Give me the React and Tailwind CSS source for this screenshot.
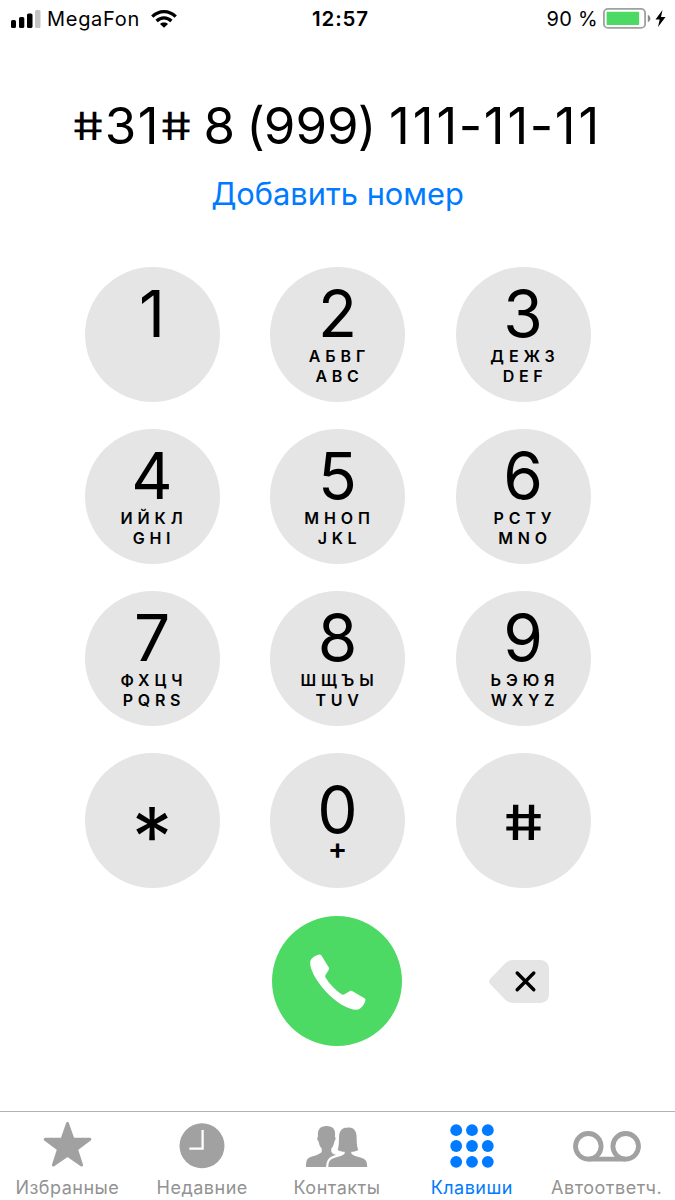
import React, { useState } from 'react';

const keys = [
  { digit: '1' },
  { digit: '2', cyr: 'АБВГ', lat: 'ABC' },
  { digit: '3', cyr: 'ДЕЖЗ', lat: 'DEF' },
  { digit: '4', cyr: 'ИЙКЛ', lat: 'GHI' },
  { digit: '5', cyr: 'МНОП', lat: 'JKL' },
  { digit: '6', cyr: 'РСТУ', lat: 'MNO' },
  { digit: '7', cyr: 'ФХЦЧ', lat: 'PQRS' },
  { digit: '8', cyr: 'ШЩЪЫ', lat: 'TUV' },
  { digit: '9', cyr: 'ЬЭЮЯ', lat: 'WXYZ' },
  { digit: '*' },
  { digit: '0' },
  { digit: '#' }
];

const StarIcon = () => (
  <svg className="mb-[3px]" width="49" height="47" viewBox="0 0 50 48" fill="#a1a1a1" stroke="#a1a1a1" strokeWidth="3" strokeLinejoin="round">
    <path d="M25 2.5 L30.6 18.7 H47.8 L34.2 28.8 L39.4 45 L25 35 L10.6 45 L15.8 28.8 L2.2 18.7 H19.4 Z" />
  </svg>
);

const ClockIcon = () => (
  <svg width="46" height="46" viewBox="0 0 46 46">
    <circle cx="23" cy="22.8" r="22.5" fill="#a1a1a1" />
    <path d="M23.6 7 V25.7 H10.3" fill="none" stroke="#fff" strokeWidth="2.3" />
  </svg>
);

const ContactsIcon = () => (
  <svg className="ml-[1px]" width="62" height="41" viewBox="0 0 62 41" fill="#a1a1a1">
    <path d="M0 41 C0 35 0.8 32.8 3.5 31.5 C8 29.5 13 29 15.7 26 V22.5 C13.8 20.5 13 18 12.6 15.5 C11 14 10.8 11.5 12 10.5 C11.2 4 14 0 20.5 0 C27.2 0 30 4 28.9 10.5 C30 11.5 29.8 14 28.4 15.5 C28 18 27.2 20.5 25.3 22.5 V26 C26.5 27.8 29 28.8 33 29.8 V41 Z" />
    <path
      d="M22.3 41 C22.5 36 23.5 33.8 27 32.4 C31.5 30.7 37 30 38.7 27.5 V25.8 C36 25.7 33.5 25.2 31.7 24 C33.3 19.5 32.8 13 33.2 9 C33.8 4 37 1.3 41 1.7 C46.5 0.3 50 4 50.5 9 C50.9 13.5 50.3 19 52.2 24 C50.5 25.2 48 25.7 45.3 25.8 V27.5 C47 30 52.5 30.7 57 32.4 C60.3 33.8 61 36 61.2 41 Z"
      stroke="#fff"
      strokeWidth="4.6"
      paintOrder="stroke"
    />
  </svg>
);

const KeypadIcon = () => (
  <svg width="44" height="44" viewBox="0 0 44 44" fill="#007aff">
    {[6.2, 22, 37.8].map((cy) =>
      [6.2, 22, 37.8].map((cx) => <circle key={`${cx}-${cy}`} cx={cx} cy={cy} r="5.9" />)
    )}
  </svg>
);

const VoicemailIcon = () => (
  <svg width="68" height="31" viewBox="0 0 68 31" fill="none" stroke="#a1a1a1" strokeWidth="4.8">
    <circle cx="15.3" cy="15.3" r="12.8" />
    <circle cx="52.7" cy="15.3" r="12.8" />
    <path d="M15.3 28.1 H52.7" />
  </svg>
);

const tabs = [
  { id: 'favorites', label: 'Избранные', icon: StarIcon },
  { id: 'recents', label: 'Недавние', icon: ClockIcon },
  { id: 'contacts', label: 'Контакты', icon: ContactsIcon },
  { id: 'keypad', label: 'Клавиши', icon: KeypadIcon },
  { id: 'voicemail', label: 'Автоответч.', icon: VoicemailIcon }
];

// Upright, shortened hash sign
const Hash = () => (
  <span className="inline-block -skew-x-[-9deg] scale-x-[0.97] scale-y-[0.76]">#</span>
);

// Spacing tweaks for the big number
const charSpacing = {
  '1': 'mx-[1.5px]',
  ' ': '-mr-[3.2px]',
  '(': '-mr-[1px]',
  ')': '-ml-[1px]'
};

const StatusBar = () => (
  <div className="grid h-[37px] grid-cols-3 items-center pl-[11px] pr-[9px] text-[20px] leading-6">
    <div className="flex items-center">
      <svg width="30" height="18" viewBox="0 0 30 18">
        <rect x="0" y="10" width="5" height="8" rx="1.6" />
        <rect x="8" y="7" width="5.3" height="11" rx="1.6" />
        <rect x="16" y="3.5" width="5.5" height="14.5" rx="1.6" />
        <rect x="24" y="0" width="5.5" height="18" rx="1.6" fill="#c4c4c4" />
      </svg>
      <span className="ml-[6px] tracking-[0.7px]">MegaFon</span>
      <svg className="ml-[11px]" width="26" height="18" viewBox="0 0 26 18" fill="none" stroke="#000" strokeWidth="3.3">
        <path d="M1.3 6.7 C8 0 18 0 24.7 6.7" />
        <path d="M5.6 11 C10 6.9 16 6.9 20.4 11" />
        <path d="M13 17.8 L9 13.9 C11.3 12 14.7 12 17 13.9 Z" fill="#000" stroke="none" />
      </svg>
    </div>
    <div className="pl-[4px] text-center text-[20.5px] font-semibold tracking-[0.9px]">12:57</div>
    <div className="flex items-center justify-end">
      <span className="tracking-[0.3px]">90 %</span>
      <svg className="ml-[5px]" width="48" height="21" viewBox="0 0 48 21">
        <rect x="0.9" y="0.9" width="41.2" height="19" rx="4" fill="#fff" stroke="#a0a0a0" strokeWidth="1.8" />
        <rect x="3.6" y="3.8" width="32.5" height="13.3" rx="0.8" fill="#4cd964" />
        <path d="M44.8 6.8 C48.3 8.5 48.3 12.5 44.8 14.2 Z" fill="#8a8a8a" />
      </svg>
      <svg className="ml-[4px]" width="11" height="17" viewBox="0 0 11 17">
        <path d="M7.5 0 L0.5 9.5 H4.7 L3 17 L10.5 7 H6 Z" />
      </svg>
    </div>
  </div>
);

const KeyButton = ({ item, onPress }) => {
  const { digit, cyr, lat } = item;
  return (
    <button
      onClick={() => onPress(digit)}
      className="flex h-[135px] w-[135px] flex-col items-center rounded-full bg-[#e5e5e5] active:bg-[#cfcfcf]"
    >
      {digit === '*' && <span className="mt-[39px] text-[81px] leading-[90px]">*</span>}
      {digit === '#' && (
        <span className="mt-[30px] text-[64px] font-medium leading-[80px]">
          <Hash />
        </span>
      )}
      {digit === '0' && (
        <>
          <span className="mt-[25px] text-[64px] leading-[64px]">0</span>
          <span className="-mt-[4px] text-[29px] font-semibold leading-[22px]">+</span>
        </>
      )}
      {!'*#0'.includes(digit) && (
        <>
          <span className="mt-[15px] text-[64px] leading-[64px]">{digit}</span>
          <span className="pl-[4px] text-[16px] font-semibold leading-[20px] tracking-[4.9px]">{cyr}</span>
          <span className="pl-[4px] text-[16px] font-semibold leading-[20px] tracking-[4.7px]">{lat}</span>
        </>
      )}
    </button>
  );
};

export default function App() {
  const [number, setNumber] = useState('#31# 8 (999) 111-11-11');
  const [activeTab, setActiveTab] = useState('keypad');

  return (
    <div className="flex h-[1200px] w-[675px] flex-col overflow-hidden bg-white font-['Inter',sans-serif] text-black">
      <StatusBar />

      {/* Dialed number */}
      <div className="mt-[57px] h-[64px] whitespace-pre pr-[2px] text-center text-[51px] leading-[64px]">
        {number.split('').map((char, i) =>
          char === '#' ? <Hash key={i} /> : <span key={i} className={charSpacing[char]}>{char}</span>
        )}
      </div>
      <button className="mx-auto mt-[16px] h-10 text-[30.8px] leading-10 text-[#007aff]">Добавить номер</button>

      {/* Keypad */}
      <div className="mx-auto mt-[53px] grid grid-cols-3 gap-x-[50.5px] gap-y-[27px]">
        {keys.map((item) => (
          <KeyButton key={item.digit} item={item} onPress={(d) => setNumber(number + d)} />
        ))}
      </div>

      {/* Call and delete */}
      <div className="mx-auto mt-[28px] grid w-[506px] grid-cols-3 items-center">
        <div />
        <button className="mx-auto flex h-[130px] w-[130px] items-center justify-center rounded-full bg-[#4cd964]">
          <svg className="ml-[2px] mt-[2px]" width="56" height="56" viewBox="0 0 56 56" fill="#fff">
            <path d="M9.2 0.5 C10 0.2 10.8 0.5 11.3 1.3 L18.5 13 C19.3 14.3 19.2 15 18.5 16.2 L15.5 21 C15 22 15.2 22.8 15.7 23.7 C19.5 30 25.5 36 31.3 40 C32.5 40.8 33.3 40.9 34.5 40.2 L39.5 37.3 C40.5 36.7 41.4 36.7 42.5 37.3 L54.5 44.2 C55.5 44.8 55.7 45.6 55.4 46.6 C54.2 50.5 52.5 53 49.5 55 C47.5 56.2 44 56 40.5 54.8 C29 51 16 40 7.5 27 C3 20 0 13.5 0.2 8.5 C0.3 4.5 4.5 1.8 9.2 0.5 Z" />
          </svg>
        </button>
        <button className="ml-[67.5px]" onClick={() => setNumber(number.slice(0, -1))}>
          <svg width="60" height="43" viewBox="0 0 60 43">
            <path
              d="M24 0 H51 C56.5 0 60 3.5 60 9 V34 C60 39.5 56.5 43 51 43 H24 C21 43 18.5 42 16.5 40 L1 24 C-0.3 22.5 -0.3 20.5 1 19 L16.5 3 C18.5 1 21 0 24 0 Z"
              fill="#e5e5e5"
            />
            <path d="M28.2 13 L44.8 29.7 M44.8 13 L28.2 29.7" stroke="#000" strokeWidth="3.4" strokeLinecap="round" />
          </svg>
        </button>
      </div>

      {/* Tab bar */}
      <div className="mt-auto grid h-[89px] grid-cols-5 border-t border-[#b2b2b2] pr-[1px]">
        {tabs.map(({ id, label, icon: Icon }) => (
          <button key={id} onClick={() => setActiveTab(id)} className="flex flex-col items-center">
            <span className="flex h-[68px] items-center justify-center">
              <Icon />
            </span>
            <span
              className={`-mt-[4px] whitespace-nowrap text-[18px] leading-6 tracking-[0.5px] ${
                activeTab === id ? 'text-[#007aff]' : 'text-[#929292]'
              }`}
            >
              {label}
            </span>
          </button>
        ))}
      </div>
    </div>
  );
}
